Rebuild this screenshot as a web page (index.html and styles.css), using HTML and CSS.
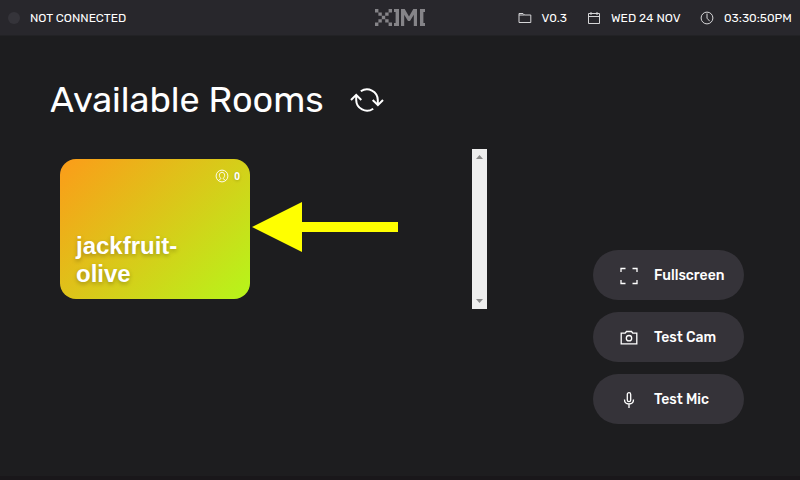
FILE: index.html
```html
<!DOCTYPE html>
<html lang="en">
<head>
<meta charset="utf-8">
<title>Available Rooms</title>
<link rel="stylesheet" href="styles.css">
</head>
<body>
<header class="bar">
  <div class="connection"><span class="dot"></span><span class="label status">NOT CONNECTED</span></div>
  <svg class="logo" viewBox="0 0 50 17" aria-label="XIMI">
    <path d="M0 0h3.4v3.4H0zM13.6 0H17v3.4h-3.4zM3.4 3.4h3.4v3.4H3.4zM10.2 3.4h3.4v3.4h-3.4zM6.8 6.8h3.4v3.4H6.8zM3.4 10.2h3.4v3.4H3.4zM10.2 10.2h3.4v3.4h-3.4zM0 13.6h3.4V17H0zM13.6 13.6H17V17h-3.4z"/>
    <path d="M19 0h5v17h-5v-3h1.6V3H19zM26 0h3.7l4.3 7.5L38.3 0H42v17h-3.2V5.8L35 12h-2l-3.8-6.2V17H26zM45 0h5v3h-1.6v11H50v3h-5z"/>
  </svg>
  <div class="info">
    <svg class="icon folder" viewBox="0 0 14 14"><path d="M1 11.5v-9h4l1.5 1.5h6.3v7.5zM1 4h5.5"/></svg>
    <span class="label version">V0.3</span>
    <svg class="icon calendar" viewBox="0 0 14 14"><path d="M1.5 2.5h11v10h-11zM1.5 5.5h11M4 1v3M10 1v3"/></svg>
    <span class="label date">WED 24 NOV</span>
    <svg class="icon clock" viewBox="0 0 14 14"><circle cx="7" cy="7" r="5.9"/><path d="M7 2.5v4.7l2.7 3"/></svg>
    <span class="label time">03:30:50PM</span>
  </div>
</header>
<main>
  <section class="rooms">
    <div class="heading">
      <h1>Available Rooms</h1>
      <svg class="refresh" viewBox="0 0 34 26"><path d="M10.8 4.3A10.8 10.8 0 0 1 27.8 13v4M22.7 13l5.2 5.2L33 13M23.2 21.7A10.8 10.8 0 0 1 6.2 13V9M1 13l5.2-5.2L11.3 13"/></svg>
    </div>
    <div class="list">
      <article class="card">
        <div class="people">
          <svg class="person" viewBox="0 0 14 14"><circle cx="7" cy="7" r="5.9"/><path d="M3.5 11.5c.4-1 2.3-1 2.3-1.9 0-.7-1.4-1.3-1.4-3.3 0-1.8 1-3 2.6-3s2.6 1.2 2.6 3c0 2-1.4 2.6-1.4 3.3 0 .9 1.9.9 2.3 1.9"/></svg>
          <span>0</span>
        </div>
        <h2>jackfruit-<br>olive</h2>
      </article>
      <svg class="arrow" viewBox="0 0 146 50"><path d="M0 25 50 0v20h96v10H50v20z"/></svg>
      <div class="scroll">
        <svg viewBox="0 0 7 4"><path d="M0 4h7L3.5 0z"/></svg>
        <svg viewBox="0 0 7 4"><path d="M0 0h7L3.5 4z"/></svg>
      </div>
    </div>
  </section>
  <nav class="actions">
    <button><svg viewBox="0 0 18 18"><path d="M1 5V1.5h4.5M12.5 1.5H17V5M17 13v3.5h-4.5M5.5 16.5H1V13"/></svg><span>Fullscreen</span></button>
    <button><svg viewBox="0 0 18 18"><path d="M1.2 4.2h4l1.3-1.7h5l1.3 1.7h4v10.6H1.2z"/><circle cx="9" cy="9.2" r="2.7"/></svg><span>Test Cam</span></button>
    <button><svg viewBox="0 0 18 18"><rect x="7.3" y="1.7" width="3.4" height="9" rx="1.7"/><path d="M4.5 8.5c0 6 9 6 9 0M9 13v4"/></svg><span>Test Mic</span></button>
  </nav>
</main>
</body>
</html>
```
FILE: styles.css
```css
* { box-sizing: border-box; }
body {
  margin: 0;
  height: 480px;
  overflow: hidden;
  background: #1d1d1f;
  color: #fff;
  font-family: Rubik, Roboto, "Liberation Sans", sans-serif;
}
svg { display: block; flex: none; fill: none; stroke: #fff; }
.bar {
  display: grid;
  grid-template-columns: 375px 50px 1fr;
  align-items: center;
  height: 36px;
  padding-right: 8px;
  background: #28272c;
  border-bottom: 1px solid #222225;
}
.connection { display: flex; align-items: center; padding-left: 8px; gap: 10px; }
.dot { width: 12px; height: 12px; border-radius: 50%; background: #35343a; }
.label { font-size: 12px; line-height: 16px; white-space: nowrap; }
.logo { width: 50px; height: 17px; fill: #858488; stroke: none; }
.info { display: flex; align-items: center; justify-content: flex-end; }
.icon { width: 14px; height: 14px; margin-right: 10px; stroke: #d5d5d7; }
.version, .date { margin-right: 20px; }
.version { width: 25.4px; }
.date { width: 69px; }
.time { width: 68px; }
main { display: flex; justify-content: space-between; height: 444px; padding: 42px 56px 0 50px; border-bottom: 4px solid #19171a; }
.rooms { width: 437px; }
.heading { display: flex; align-items: center; height: 43px; }
h1 { width: 300px; margin: 0; font-size: 36px; line-height: 43px; font-weight: 400; white-space: nowrap; }
.refresh { width: 34px; height: 26px; stroke-width: 2; }
.list { display: flex; height: 160px; margin-top: 28px; padding-left: 10px; }
.card {
  display: flex;
  flex-direction: column;
  justify-content: space-between;
  width: 190px;
  height: 140px;
  margin-top: 10px;
  padding: 10px 10px 11px 16px;
  border-radius: 16px;
  background: linear-gradient(135deg, #fc9c19, #b6f61a);
}
.people { display: flex; align-items: center; justify-content: flex-end; gap: 5px; height: 14px; font: 700 10px/14px "Open Sans", sans-serif; text-shadow: 0 1px 3px #0003; }
.people span { width: 6px; text-align: center; }
.person { width: 14px; height: 14px; stroke: #fff; stroke-width: 0.9; }
h2 { margin: 0; font: 700 24px/28px "Liberation Sans", sans-serif; text-shadow: 0 2px 4px #0004; }
.arrow { width: 146px; height: 50px; margin: 53px 0 0 2px; fill: #ff0; stroke: none; }
.scroll {
  display: flex;
  flex-direction: column;
  align-items: center;
  justify-content: space-between;
  width: 15px;
  height: 160px;
  margin-left: auto;
  padding: 6px 0;
  background: #eee;
}
.scroll svg { width: 7px; height: 4px; fill: #8b8b8b; stroke: none; }
.actions { display: flex; flex-direction: column; gap: 12px; width: 151px; padding-top: 172px; }
button {
  display: flex;
  align-items: center;
  gap: 16px;
  width: 151px;
  height: 50px;
  padding: 0 0 0 27px;
  border: 0;
  border-radius: 25px;
  background: #353339;
  color: #fff;
  font: 500 14px/20px Rubik, Roboto, sans-serif;
  white-space: nowrap;
}
button svg { width: 18px; height: 18px; stroke-width: 1.3; margin-top: 2px; }
button span { padding-top: 2px; }
```
